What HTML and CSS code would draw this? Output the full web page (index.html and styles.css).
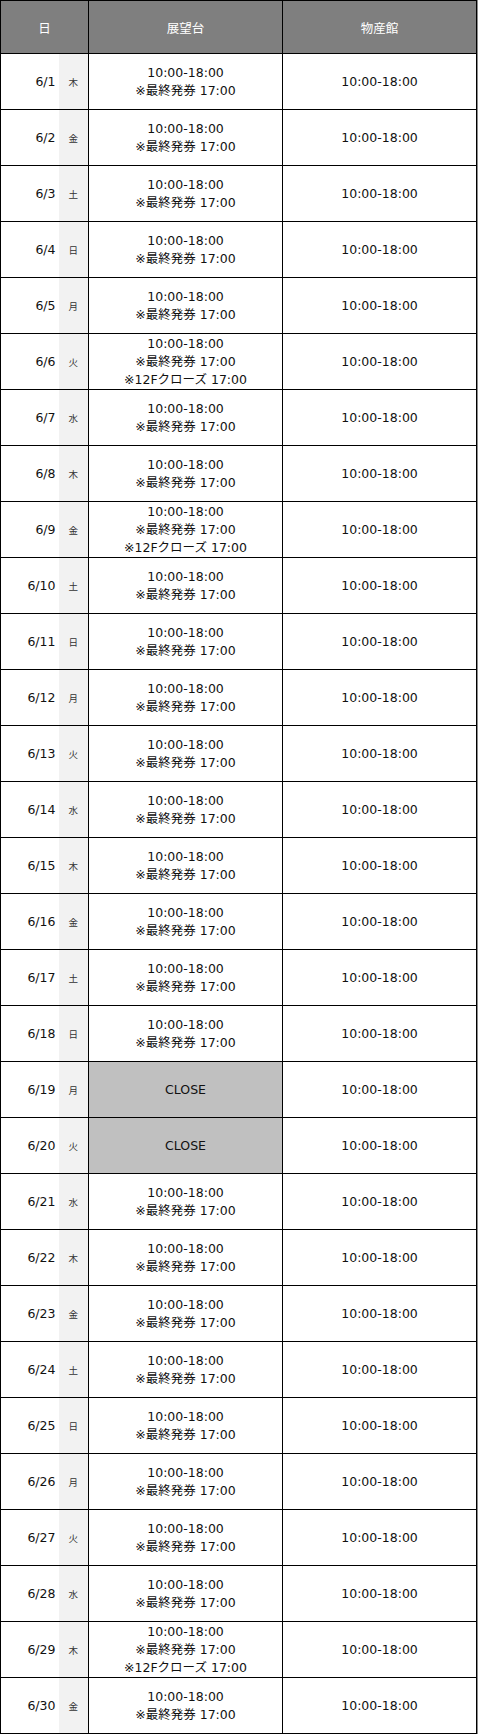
FILE: index.html
```html
<!DOCTYPE html>
<html lang="ja">
<head>
<meta charset="utf-8">
<title>営業時間</title>
<link rel="stylesheet" href="styles.css">
</head>
<body>
<div class="frame">
<table class="hours">
<colgroup><col class="c-date"><col class="c-dow"><col class="c-main"><col class="c-main"></colgroup>
<thead>
<tr><th colspan="2">日</th><th>展望台</th><th>物産館</th></tr>
</thead>
<tbody>
<tr><td class="date">6/1</td><td class="dow">木</td><td class="t">10:00-18:00<br>※最終発券 17:00</td><td class="t">10:00-18:00</td></tr>
<tr><td class="date">6/2</td><td class="dow">金</td><td class="t">10:00-18:00<br>※最終発券 17:00</td><td class="t">10:00-18:00</td></tr>
<tr><td class="date">6/3</td><td class="dow">土</td><td class="t">10:00-18:00<br>※最終発券 17:00</td><td class="t">10:00-18:00</td></tr>
<tr><td class="date">6/4</td><td class="dow">日</td><td class="t">10:00-18:00<br>※最終発券 17:00</td><td class="t">10:00-18:00</td></tr>
<tr><td class="date">6/5</td><td class="dow">月</td><td class="t">10:00-18:00<br>※最終発券 17:00</td><td class="t">10:00-18:00</td></tr>
<tr><td class="date">6/6</td><td class="dow">火</td><td class="t">10:00-18:00<br>※最終発券 17:00<br>※12Fクローズ 17:00</td><td class="t">10:00-18:00</td></tr>
<tr><td class="date">6/7</td><td class="dow">水</td><td class="t">10:00-18:00<br>※最終発券 17:00</td><td class="t">10:00-18:00</td></tr>
<tr><td class="date">6/8</td><td class="dow">木</td><td class="t">10:00-18:00<br>※最終発券 17:00</td><td class="t">10:00-18:00</td></tr>
<tr><td class="date">6/9</td><td class="dow">金</td><td class="t">10:00-18:00<br>※最終発券 17:00<br>※12Fクローズ 17:00</td><td class="t">10:00-18:00</td></tr>
<tr><td class="date">6/10</td><td class="dow">土</td><td class="t">10:00-18:00<br>※最終発券 17:00</td><td class="t">10:00-18:00</td></tr>
<tr><td class="date">6/11</td><td class="dow">日</td><td class="t">10:00-18:00<br>※最終発券 17:00</td><td class="t">10:00-18:00</td></tr>
<tr><td class="date">6/12</td><td class="dow">月</td><td class="t">10:00-18:00<br>※最終発券 17:00</td><td class="t">10:00-18:00</td></tr>
<tr><td class="date">6/13</td><td class="dow">火</td><td class="t">10:00-18:00<br>※最終発券 17:00</td><td class="t">10:00-18:00</td></tr>
<tr><td class="date">6/14</td><td class="dow">水</td><td class="t">10:00-18:00<br>※最終発券 17:00</td><td class="t">10:00-18:00</td></tr>
<tr><td class="date">6/15</td><td class="dow">木</td><td class="t">10:00-18:00<br>※最終発券 17:00</td><td class="t">10:00-18:00</td></tr>
<tr><td class="date">6/16</td><td class="dow">金</td><td class="t">10:00-18:00<br>※最終発券 17:00</td><td class="t">10:00-18:00</td></tr>
<tr><td class="date">6/17</td><td class="dow">土</td><td class="t">10:00-18:00<br>※最終発券 17:00</td><td class="t">10:00-18:00</td></tr>
<tr><td class="date">6/18</td><td class="dow">日</td><td class="t">10:00-18:00<br>※最終発券 17:00</td><td class="t">10:00-18:00</td></tr>
<tr><td class="date">6/19</td><td class="dow">月</td><td class="t close">CLOSE</td><td class="t">10:00-18:00</td></tr>
<tr><td class="date">6/20</td><td class="dow">火</td><td class="t close">CLOSE</td><td class="t">10:00-18:00</td></tr>
<tr><td class="date">6/21</td><td class="dow">水</td><td class="t">10:00-18:00<br>※最終発券 17:00</td><td class="t">10:00-18:00</td></tr>
<tr><td class="date">6/22</td><td class="dow">木</td><td class="t">10:00-18:00<br>※最終発券 17:00</td><td class="t">10:00-18:00</td></tr>
<tr><td class="date">6/23</td><td class="dow">金</td><td class="t">10:00-18:00<br>※最終発券 17:00</td><td class="t">10:00-18:00</td></tr>
<tr><td class="date">6/24</td><td class="dow">土</td><td class="t">10:00-18:00<br>※最終発券 17:00</td><td class="t">10:00-18:00</td></tr>
<tr><td class="date">6/25</td><td class="dow">日</td><td class="t">10:00-18:00<br>※最終発券 17:00</td><td class="t">10:00-18:00</td></tr>
<tr><td class="date">6/26</td><td class="dow">月</td><td class="t">10:00-18:00<br>※最終発券 17:00</td><td class="t">10:00-18:00</td></tr>
<tr><td class="date">6/27</td><td class="dow">火</td><td class="t">10:00-18:00<br>※最終発券 17:00</td><td class="t">10:00-18:00</td></tr>
<tr><td class="date">6/28</td><td class="dow">水</td><td class="t">10:00-18:00<br>※最終発券 17:00</td><td class="t">10:00-18:00</td></tr>
<tr><td class="date">6/29</td><td class="dow">木</td><td class="t">10:00-18:00<br>※最終発券 17:00<br>※12Fクローズ 17:00</td><td class="t">10:00-18:00</td></tr>
<tr><td class="date">6/30</td><td class="dow">金</td><td class="t">10:00-18:00<br>※最終発券 17:00</td><td class="t">10:00-18:00</td></tr>
</tbody>
</table>
</div>
</body>
</html>
```
FILE: styles.css
```css
html, body {
  margin: 0;
  padding: 0;
  background: #fff;
}
.frame {
  display: inline-block;
  vertical-align: top;
  border-right: 1px solid #8a8a8a;
  border-bottom: 2px solid #8a8a8a;
}
.hours {
  border-collapse: collapse;
  table-layout: fixed;
  width: 477px;
  font-family: "DejaVu Sans", "Noto Sans CJK JP", sans-serif;
  font-size: 12.5px;
  color: #111;
}
.c-date { width: 58px; }
.c-dow { width: 30px; }
.c-main { width: 194px; }
.hours th,
.hours td {
  border: 1px solid #000;
  padding: 0;
  vertical-align: middle;
}
.hours thead tr {
  height: 53px;
}
.hours th {
  background: #7f7f7f;
  color: #fff;
  font-weight: normal;
  text-align: center;
  font-family: "Noto Sans CJK JP", sans-serif;
  font-size: 12.5px;
}
.hours tbody tr {
  height: 56px;
}
.hours td.date {
  border-right: none;
  text-align: right;
  padding-right: 3px;
}
.hours td.dow {
  border-left: none;
  background: #f2f2f2;
  text-align: center;
  font-family: "Noto Sans CJK JP", sans-serif;
  font-size: 9.5px;
  color: #333;
}
.hours td.t {
  text-align: center;
  line-height: 18px;
}
.hours td.close {
  background: #c0c0c0;
}
```
